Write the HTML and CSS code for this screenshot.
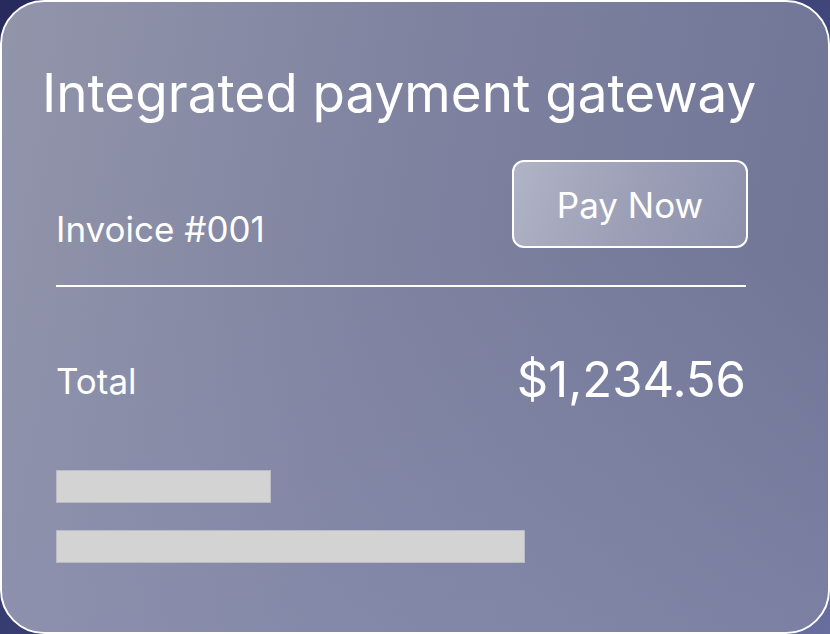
FILE: index.html
```html
<!DOCTYPE html>
<html>
<head>
<meta charset="utf-8">
<link rel="stylesheet" href="styles.css">
</head>
<body>
<div class="card">
  <h1 class="title">Integrated payment gateway</h1>
  <div class="content">
    <div class="row head-row">
      <span class="invoice">Invoice #001</span>
      <button class="pay">Pay Now</button>
    </div>
    <div class="divider"></div>
    <div class="row total-row">
      <span class="total">Total</span>
      <span class="amount">$1,234.56</span>
    </div>
    <div class="bar bar-short"></div>
    <div class="bar bar-long"></div>
  </div>
</div>
</body>
</html>
```
FILE: styles.css
```css
html, body {
  margin: 0;
  padding: 0;
  width: 830px;
  height: 634px;
  overflow: hidden;
  background: linear-gradient(135deg, #262a5c 0%, #3a4074 50%, #686e9e 100%);
  font-family: Inter, "Noto Sans", sans-serif;
  font-weight: 400;
  color: #ffffff;
}
.card {
  box-sizing: border-box;
  width: 830px;
  height: 634px;
  border: 2px solid #ffffff;
  border-radius: 44px;
  background: linear-gradient(100deg, #9295aa 0%, #7f83a0 45%, #6f7496 100%);
  position: relative;
  overflow: hidden;
  padding: 62px 0 0 40px;
}
.card::after {
  content: "";
  position: absolute;
  inset: 0;
  background: linear-gradient(180deg, rgba(140,145,180,0) 40%, rgba(140,145,180,0.45) 100%);
  pointer-events: none;
}
.title {
  margin: 0;
  font-size: 53px;
  font-weight: 400;
  line-height: 58px;
  letter-spacing: 0;
  position: relative;
  z-index: 1;
}
.content {
  position: relative;
  z-index: 1;
  width: 690px;
  margin: 38px 0 0 14px;
}
.row {
  display: flex;
  justify-content: space-between;
}
.head-row {
  align-items: flex-end;
}
.invoice {
  font-size: 35px;
  line-height: 40px;
  margin-bottom: -1px;
}
.pay {
  box-sizing: border-box;
  width: 236px;
  height: 88px;
  border: 2px solid #ffffff;
  border-radius: 12px;
  background: linear-gradient(110deg, #b1b4c6 0%, #9c9fb6 50%, #8d90ab 100%);
  color: #ffffff;
  font-family: Inter, "Noto Sans", sans-serif;
  font-weight: 400;
  font-size: 35px;
  padding: 2px 0 0 0;
  margin-right: -2px;
}
.divider {
  height: 2px;
  background: #ffffff;
  margin-top: 37px;
}
.total-row {
  align-items: center;
  margin-top: 65px;
}
.total {
  font-size: 35px;
  line-height: 40px;
  margin-top: 2px;
}
.amount {
  font-size: 49px;
  line-height: 56px;
}
.bar {
  height: 33px;
  background: #d3d3d3;
  box-shadow: inset 0 0 0 1px rgba(170,172,190,0.6);
}
.bar-short {
  width: 215px;
  margin-top: 62px;
}
.bar-long {
  width: 469px;
  margin-top: 27px;
}
```
